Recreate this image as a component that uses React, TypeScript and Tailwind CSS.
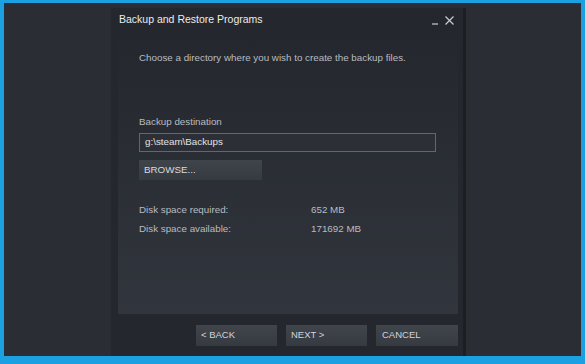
export default function App() {
  const font = { fontFamily: '"Liberation Sans", Arial, sans-serif' };
  return (
    <div className="w-[585px] h-[364px] bg-[#1ba0e2] pt-[3px] pl-[4px] pr-[4px] pb-[8px]" style={font}>
      <div className="w-full h-full bg-[#2a2d34] pt-[5px] pl-[107px]">
        <div className="w-[355px] h-full bg-[#24272d] border-r-[3px] border-r-[#1c1e22] flex flex-col">
          <div className="h-[24px] flex items-center pl-[8px] pr-[9px] text-[10.5px] text-[#ececec] justify-between">
            <span>Backup and Restore Programs</span>
            <div className="flex items-center gap-[6px] text-[#c8cbd0]">
              <svg width="7" height="10" viewBox="0 0 7 10"><path d="M0 9h6" stroke="currentColor" strokeWidth="1.2" /></svg>
              <svg width="9" height="9" viewBox="0 0 9 9"><path d="M0.5 0.5l8 8M8.5 0.5l-8 8" stroke="currentColor" strokeWidth="1.2" /></svg>
            </div>
          </div>
          <div className="ml-[7px] mr-[5px] h-[282px] bg-gradient-to-b from-[#24272d] to-[#31353d] pl-[21px] pr-[20px] text-[9.8px] text-[#b9bcc1]">
            <div className="pt-[20px] leading-[12px]">Choose a directory where you wish to create the backup files.</div>
            <div className="mt-[52px] leading-[12px]">Backup destination</div>
            <div className="mt-[5px] h-[19px] w-[297px] border border-[#62666d] bg-[#2c2f36] text-[#e2e4e7] pl-[5px] flex items-center">g:\steam\Backups</div>
            <div className="mt-[8px] h-[20px] w-[123px] bg-gradient-to-b from-[#40444b] to-[#363a41] text-[#d8dadd] pl-[5px] flex items-center">BROWSE...</div>
            <div className="mt-[24px] flex leading-[12px]"><span className="w-[172px]">Disk space required:</span><span>652 MB</span></div>
            <div className="mt-[7px] flex leading-[12px]"><span className="w-[172px]">Disk space available:</span><span>171692 MB</span></div>
          </div>
          <div className="flex justify-end gap-[9px] mr-[5px] mt-[11px] text-[9.5px] text-[#d3d5d9]">
            <div className="w-[81px] h-[21px] bg-gradient-to-b from-[#40444b] to-[#363a41] pl-[5px] flex items-center">&lt; BACK</div>
            <div className="w-[81px] h-[21px] bg-gradient-to-b from-[#40444b] to-[#363a41] pl-[5px] flex items-center">NEXT &gt;</div>
            <div className="w-[82px] h-[21px] bg-gradient-to-b from-[#40444b] to-[#363a41] pl-[6px] flex items-center">CANCEL</div>
          </div>
        </div>
      </div>
    </div>
  );
}
